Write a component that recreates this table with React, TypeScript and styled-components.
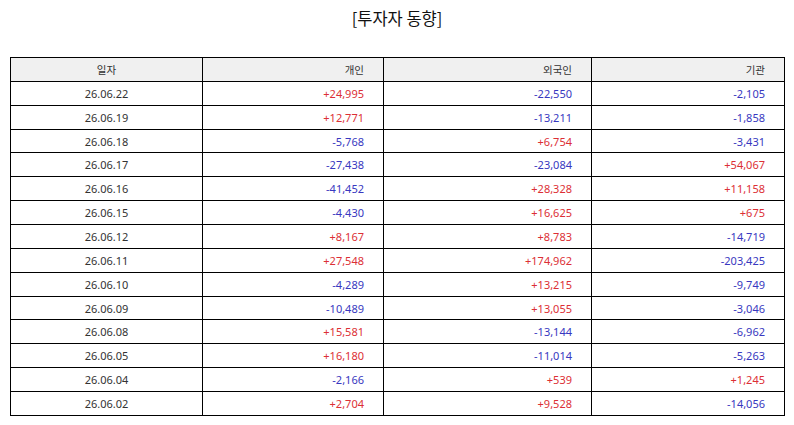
import React from 'react';
import styled, { createGlobalStyle } from 'styled-components';

const GlobalStyle = createGlobalStyle`
  html, body {
    margin: 0;
    padding: 0;
    background: #ffffff;
  }
  body {
    font-family: 'Noto Sans', 'Noto Sans CJK KR', sans-serif;
    color: #333333;
  }
`;

const Page = styled.div`
  width: 794px;
  height: 425px;
  padding: 0 10px;
  box-sizing: border-box;
  display: flex;
  flex-direction: column;
`;

const Title = styled.h1`
  margin: 0;
  padding-top: 6px;
  height: 57px;
  box-sizing: border-box;
  text-align: center;
  font-family: 'Noto Sans CJK KR', 'Noto Sans', sans-serif;
  font-size: 16.5px;
  font-weight: 400;
  line-height: 24px;
  color: #111111;
`;

const Table = styled.table`
  width: 774px;
  border-collapse: collapse;
  table-layout: fixed;
  font-size: 11px;
`;

const HeadCell = styled.th<{ align: 'center' | 'right' }>`
  height: 22.87px;
  padding: 0 ${p => (p.align === 'right' ? '19px' : '0')} 0 0;
  border: 1.3px solid #000000;
  background: #f0f0f0;
  font-family: 'Noto Sans CJK KR', 'Noto Sans', sans-serif;
  font-weight: 400;
  font-size: 10.5px;
  color: #333333;
  text-align: ${p => p.align};
`;

const DateCell = styled.td`
  height: 22.87px;
  padding: 0;
  border: 1.3px solid #000000;
  text-align: center;
  color: #333333;
`;

const NumCell = styled.td<{ up: boolean }>`
  height: 22.87px;
  padding: 0 19px 0 0;
  border: 1.3px solid #000000;
  text-align: right;
  color: ${p => (p.up ? '#dc2f35' : '#3838c0')};
`;

interface Row {
  date: string;
  person: string;
  foreign: string;
  inst: string;
}

const rows: Row[] = [
  { date: '26.06.22', person: '+24,995', foreign: '-22,550', inst: '-2,105' },
  { date: '26.06.19', person: '+12,771', foreign: '-13,211', inst: '-1,858' },
  { date: '26.06.18', person: '-5,768', foreign: '+6,754', inst: '-3,431' },
  { date: '26.06.17', person: '-27,438', foreign: '-23,084', inst: '+54,067' },
  { date: '26.06.16', person: '-41,452', foreign: '+28,328', inst: '+11,158' },
  { date: '26.06.15', person: '-4,430', foreign: '+16,625', inst: '+675' },
  { date: '26.06.12', person: '+8,167', foreign: '+8,783', inst: '-14,719' },
  { date: '26.06.11', person: '+27,548', foreign: '+174,962', inst: '-203,425' },
  { date: '26.06.10', person: '-4,289', foreign: '+13,215', inst: '-9,749' },
  { date: '26.06.09', person: '-10,489', foreign: '+13,055', inst: '-3,046' },
  { date: '26.06.08', person: '+15,581', foreign: '-13,144', inst: '-6,962' },
  { date: '26.06.05', person: '+16,180', foreign: '-11,014', inst: '-5,263' },
  { date: '26.06.04', person: '-2,166', foreign: '+539', inst: '+1,245' },
  { date: '26.06.02', person: '+2,704', foreign: '+9,528', inst: '-14,056' },
];

export default function App() {
  return (
    <Page>
      <GlobalStyle />
      <Title>[투자자 동향]</Title>
      <Table>
        <colgroup>
          <col style={{ width: 192 }} />
          <col style={{ width: 181 }} />
          <col style={{ width: 208 }} />
          <col style={{ width: 193 }} />
        </colgroup>
        <thead>
          <tr>
            <HeadCell align="center">일자</HeadCell>
            <HeadCell align="right">개인</HeadCell>
            <HeadCell align="right">외국인</HeadCell>
            <HeadCell align="right">기관</HeadCell>
          </tr>
        </thead>
        <tbody>
          {rows.map(row => (
            <tr key={row.date}>
              <DateCell>{row.date}</DateCell>
              <NumCell up={row.person.startsWith('+')}>{row.person}</NumCell>
              <NumCell up={row.foreign.startsWith('+')}>{row.foreign}</NumCell>
              <NumCell up={row.inst.startsWith('+')}>{row.inst}</NumCell>
            </tr>
          ))}
        </tbody>
      </Table>
    </Page>
  );
}
